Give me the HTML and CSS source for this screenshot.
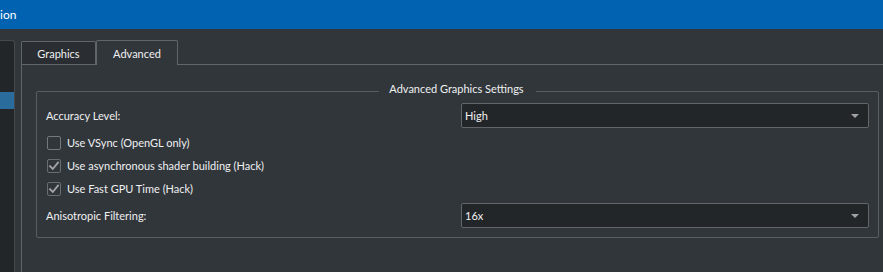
FILE: index.html
```html
<!DOCTYPE html>
<html>
<head>
<meta charset="utf-8">
<link rel="stylesheet" href="styles.css">
</head>
<body>
<div class="titlebar"><span class="title">ion</span></div>
<div class="main">
  <div class="sidebar"><div class="sel"></div></div>
  <div class="tabwidget">
    <div class="tabbar">
      <div class="tab tab-graphics">Graphics</div>
      <div class="tab tab-advanced active">Advanced</div>
    </div>
    <div class="pane">
      <fieldset class="group">
        <legend class="group-title">Advanced Graphics Settings</legend>
        <div class="form-row">
          <span class="label">Accuracy Level:</span>
          <div class="combo"><span class="combo-text">High</span><span class="arrow"></span></div>
        </div>
        <div class="checks">
          <label class="check"><span class="box"></span><span>Use VSync (OpenGL only)</span></label>
          <label class="check"><span class="box checked"><svg viewBox="0 0 14 14" width="14" height="14"><path d="M3 7.2 L5.8 10 L11 3.6" fill="none" stroke="#a3a5a7" stroke-width="1.8" stroke-linecap="square"/></svg></span><span>Use asynchronous shader building (Hack)</span></label>
          <label class="check"><span class="box checked"><svg viewBox="0 0 14 14" width="14" height="14"><path d="M3 7.2 L5.8 10 L11 3.6" fill="none" stroke="#a3a5a7" stroke-width="1.8" stroke-linecap="square"/></svg></span><span>Use Fast GPU Time (Hack)</span></label>
        </div>
        <div class="form-row form-row-last">
          <span class="label">Anisotropic Filtering:</span>
          <div class="combo"><span class="combo-text">16x</span><span class="arrow"></span></div>
        </div>
      </fieldset>
    </div>
  </div>
</div>
</body>
</html>
```

FILE: styles.css
```css
html, body {
  margin: 0;
  padding: 0;
}
body {
  width: 883px;
  height: 272px;
  overflow: hidden;
  background: #31363b;
  color: #eff0f1;
  font-family: Lato, "Noto Sans", sans-serif;
  font-size: 11px;
  line-height: 15px;
}
.titlebar {
  height: 29px;
  background: #0062b0;
  display: flex;
  align-items: center;
  color: #ffffff;
}
.title {
  font-size: 12px;
}
.main {
  display: flex;
  height: 243px;
  padding-top: 11px;
  box-sizing: border-box;
}
.sidebar {
  width: 14px;
  flex-shrink: 0;
  background: #232629;
  border-top: 1px solid #464a4f;
  border-right: 1px solid #464a4f;
  border-top-right-radius: 3px;
  padding-top: 51px;
}
.sel {
  height: 17px;
  background: #2a6c9c;
}
.tabwidget {
  width: 873px;
  flex-shrink: 0;
  margin-left: 6px;
  display: flex;
  flex-direction: column;
}
.tabbar {
  display: flex;
  align-items: flex-end;
  height: 24px;
}
.tab {
  box-sizing: border-box;
  border: 1px solid #62666a;
  border-bottom: none;
  border-radius: 2px 2px 0 0;
  text-align: center;
  display: flex;
  align-items: center;
  justify-content: center;
}
.tab-graphics {
  width: 75px;
  height: 23px;
  background: #2a2e32;
}
.tab-advanced {
  width: 82px;
  height: 25px;
  margin-bottom: -1px;
  background: #31363b;
  position: relative;
  z-index: 1;
}
.pane {
  flex: 1;
  border-top: 1px solid #62666a;
  border-left: 1px solid #62666a;
  border-right: 1px solid #62666a;
  padding: 0 14px;
}
.group {
  margin: 16px 0 0 0;
  padding: 1px 9px 9px 9px;
  border: 1px solid #5a5e62;
  border-radius: 2px;
  min-width: 0;
}
.group-title {
  margin-left: auto;
  margin-right: auto;
  padding: 0 12px 6px 10px;
  line-height: 15px;
}
.form-row {
  display: grid;
  grid-template-columns: 415px 1fr;
  align-items: center;
}
.combo {
  height: 25px;
  box-sizing: border-box;
  background: #232629;
  border: 1px solid #62666a;
  border-radius: 2px;
  display: flex;
  align-items: center;
  padding: 0 9px 0 3px;
}
.combo-text {
  flex: 1;
}
.arrow {
  width: 0;
  height: 0;
  border-left: 4px solid transparent;
  border-right: 4px solid transparent;
  border-top: 4px solid #a0a2a4;
}
.checks {
  display: flex;
  flex-direction: column;
  margin-top: 3px;
}
.check {
  display: flex;
  align-items: center;
  height: 23px;
  padding-left: 1px;
  gap: 6px;
}
.box {
  width: 14px;
  height: 14px;
  box-sizing: border-box;
  border: 1px solid #76797c;
  border-radius: 2px;
  display: flex;
}
.box.checked {
  border-color: #6a6d70;
}
.box svg {
  margin: -1px;
}
.form-row-last {
  margin-top: 3px;
}
```
